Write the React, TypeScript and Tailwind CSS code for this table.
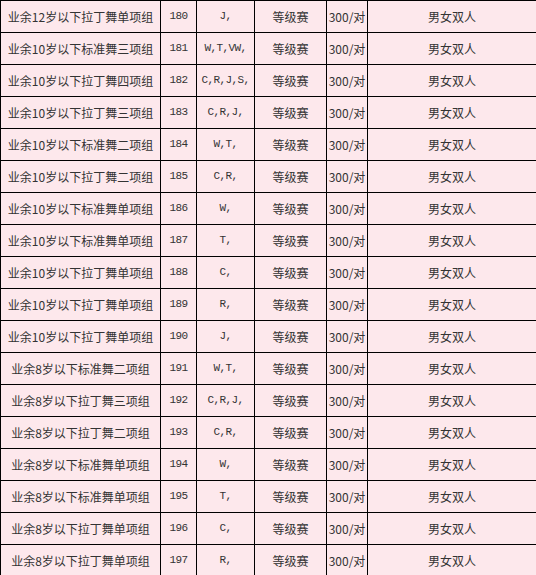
const rows = [
  ["业余12岁以下拉丁舞单项组", "180", "J,"],
  ["业余10岁以下标准舞三项组", "181", "W,T,VW,"],
  ["业余10岁以下拉丁舞四项组", "182", "C,R,J,S,"],
  ["业余10岁以下拉丁舞三项组", "183", "C,R,J,"],
  ["业余10岁以下标准舞二项组", "184", "W,T,"],
  ["业余10岁以下拉丁舞二项组", "185", "C,R,"],
  ["业余10岁以下标准舞单项组", "186", "W,"],
  ["业余10岁以下标准舞单项组", "187", "T,"],
  ["业余10岁以下拉丁舞单项组", "188", "C,"],
  ["业余10岁以下拉丁舞单项组", "189", "R,"],
  ["业余10岁以下拉丁舞单项组", "190", "J,"],
  ["业余8岁以下标准舞二项组", "191", "W,T,"],
  ["业余8岁以下拉丁舞三项组", "192", "C,R,J,"],
  ["业余8岁以下拉丁舞二项组", "193", "C,R,"],
  ["业余8岁以下标准舞单项组", "194", "W,"],
  ["业余8岁以下标准舞单项组", "195", "T,"],
  ["业余8岁以下拉丁舞单项组", "196", "C,"],
  ["业余8岁以下拉丁舞单项组", "197", "R,"],
];

const cjk = "font-['Noto_Sans_CJK_SC','Noto_Sans',sans-serif]";
const mono = "font-['Liberation_Mono',monospace] tracking-[-0.6px]";

export default function App() {
  return (
    <div className="w-[536px] h-[575px] overflow-hidden bg-white">
      <table className="w-[536px] table-fixed border-collapse bg-[#fde8ec] text-[#333]">
        <colgroup>
          <col className="w-[160px]" />
          <col className="w-[36px]" />
          <col className="w-[58px]" />
          <col className="w-[72px]" />
          <col className="w-[41px]" />
          <col className="w-[169px]" />
        </colgroup>
        <tbody>
          {rows.map(([name, no, dances], i) => (
            <tr key={i} className="h-[32px]">
              <td className={`border border-black p-0 text-center text-[12px] whitespace-nowrap ${cjk}`}>{name}</td>
              <td className={`border border-black p-0 text-center text-[11px] ${mono}`}>{no}</td>
              <td className={`border border-black p-0 text-center text-[11px] ${mono}`}>{dances}</td>
              <td className={`border border-black p-0 text-center text-[12px] ${cjk}`}>等级赛</td>
              <td className={`border border-black p-0 text-center text-[12px] whitespace-nowrap overflow-visible ${cjk}`}>300/对</td>
              <td className={`border border-black p-0 text-center text-[12px] ${cjk}`}>男女双人</td>
            </tr>
          ))}
        </tbody>
      </table>
    </div>
  );
}
